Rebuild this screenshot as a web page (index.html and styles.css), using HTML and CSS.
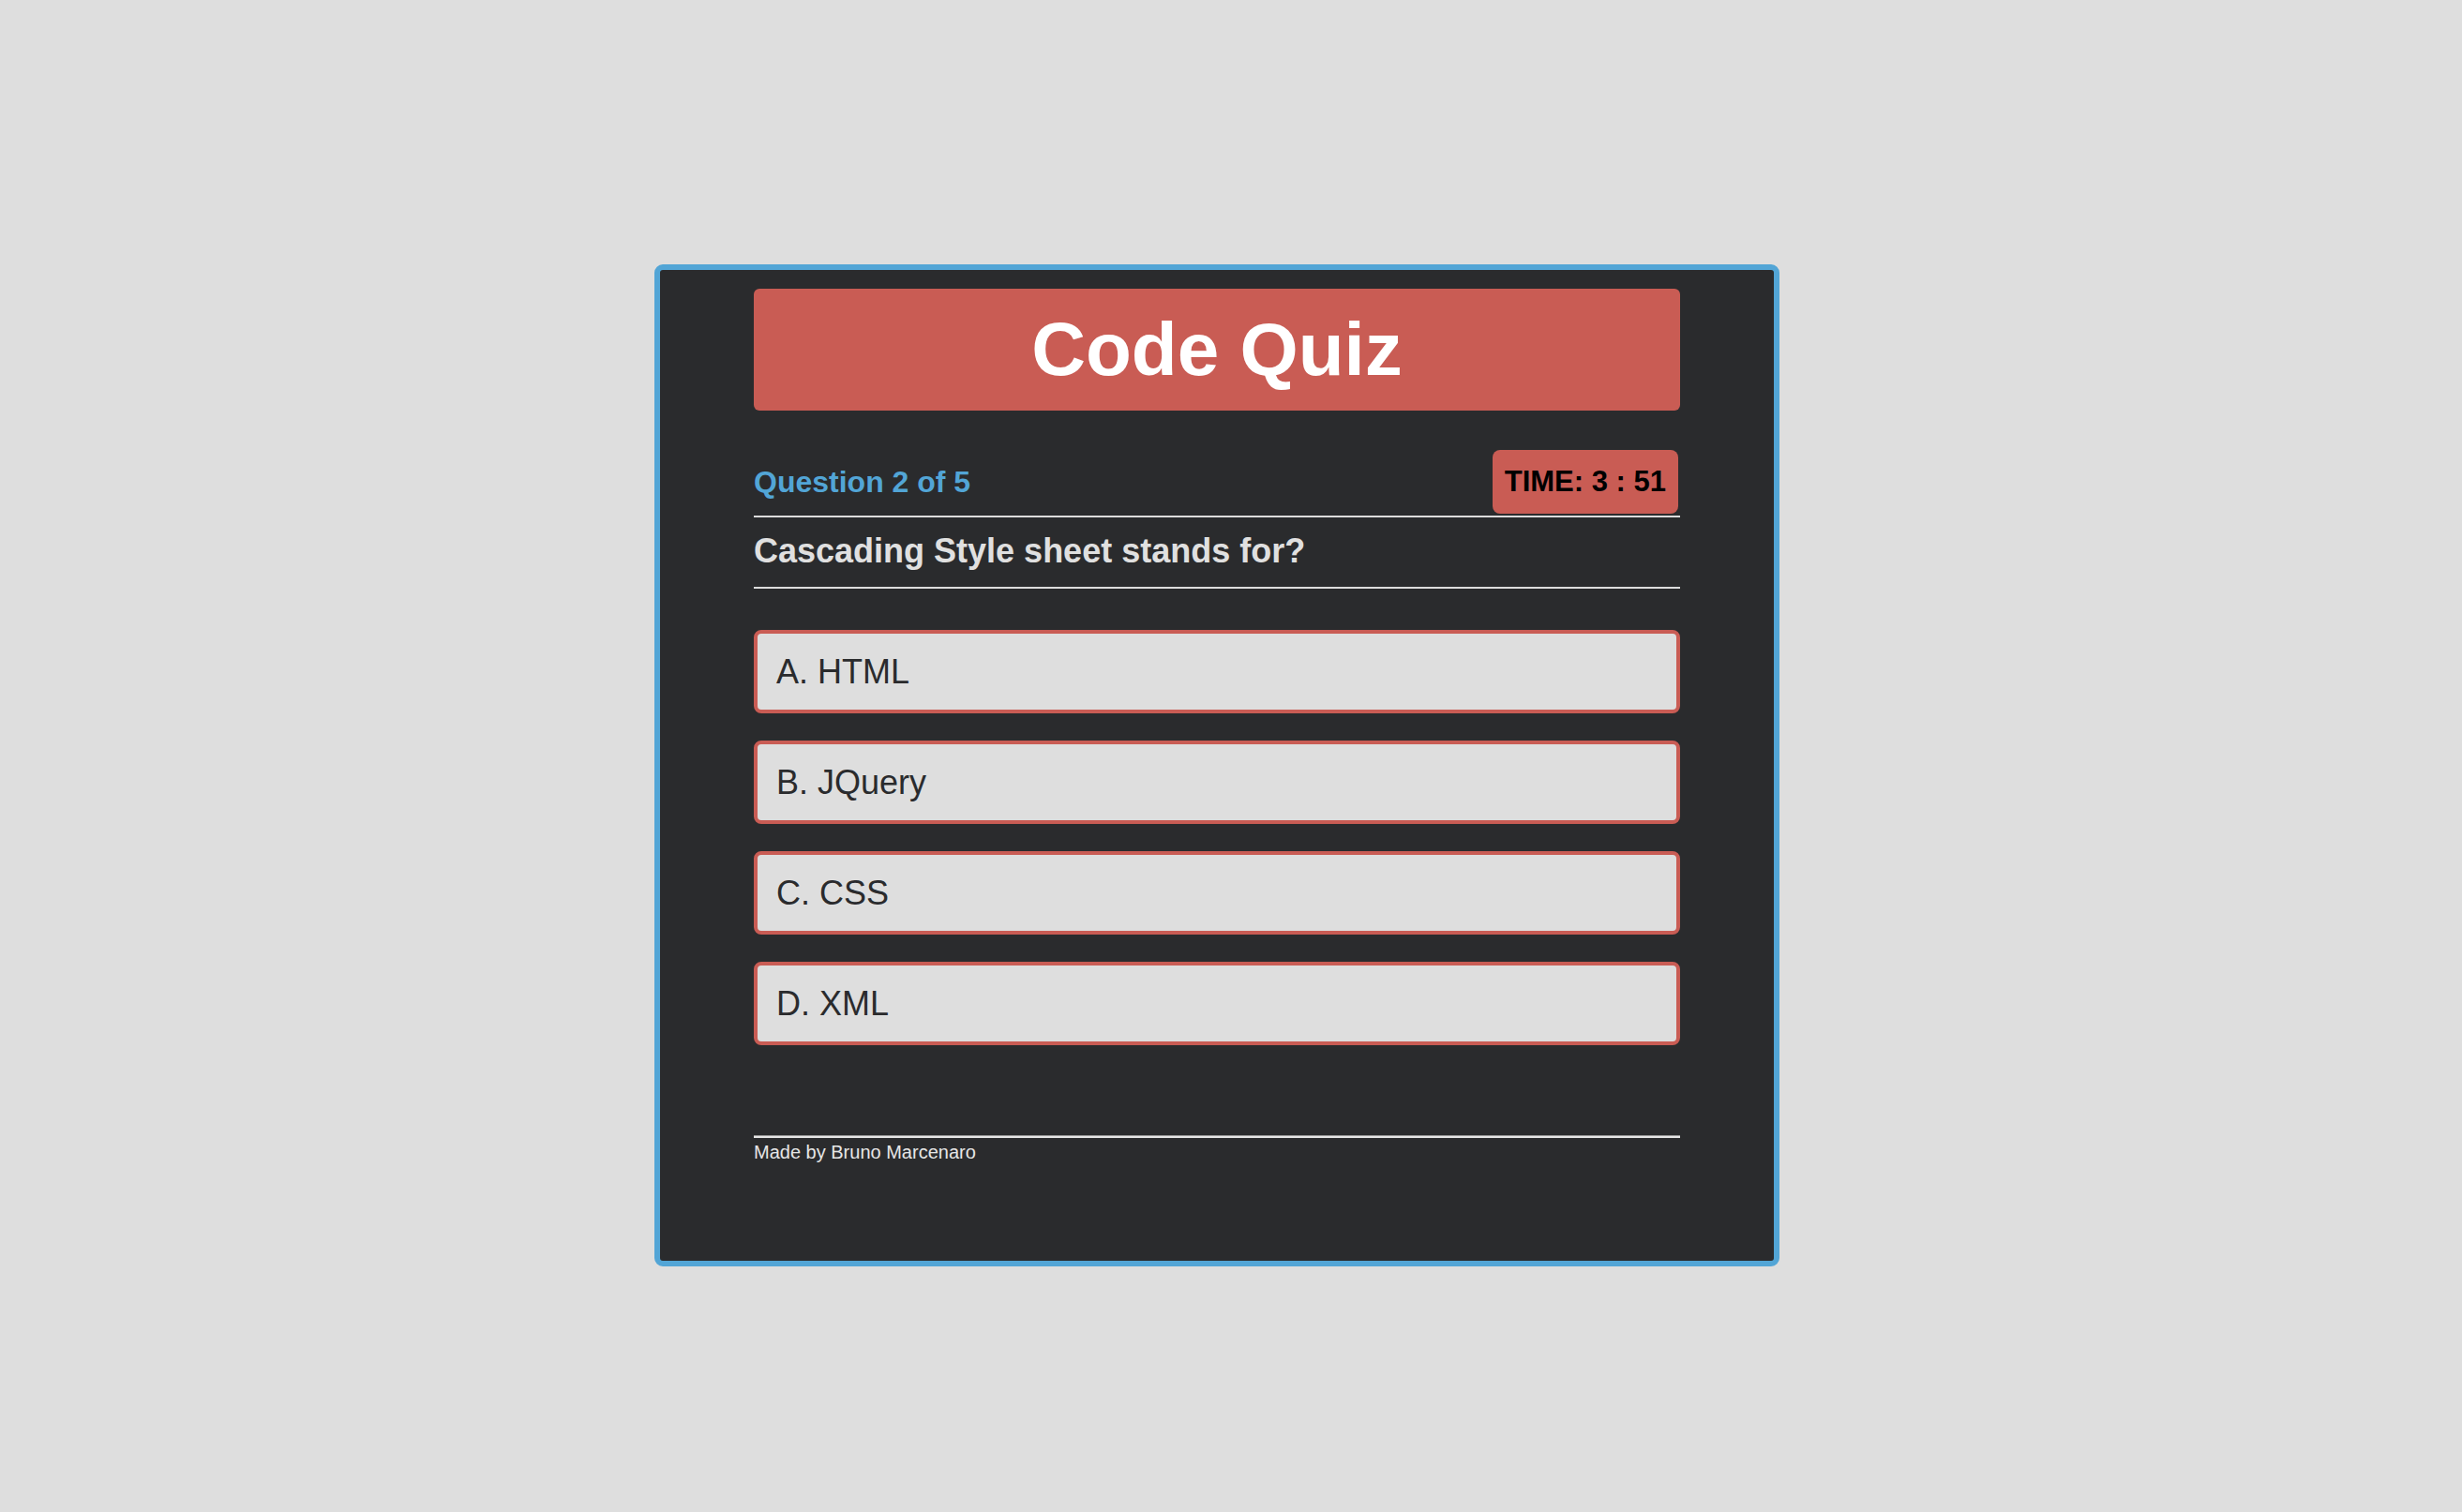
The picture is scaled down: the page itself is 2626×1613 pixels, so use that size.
FILE: index.html
```html
<!DOCTYPE html>
<html lang="en">
<head>
<meta charset="utf-8">
<title>Code Quiz</title>
<link rel="stylesheet" href="styles.css">
</head>
<body>
<div class="page">
  <main class="card">
    <header class="banner">
      <h1 class="title">Code Quiz</h1>
    </header>
    <div class="status">
      <span class="counter">Question 2 of 5</span>
      <span class="timer">TIME: 3 : 51</span>
    </div>
    <h2 class="question">Cascading Style sheet stands for?</h2>
    <ul class="options">
      <li class="option">A. HTML</li>
      <li class="option">B. JQuery</li>
      <li class="option">C. CSS</li>
      <li class="option">D. XML</li>
    </ul>
    <footer class="footer">
      <hr class="rule">
      <p class="credit">Made by Bruno Marcenaro</p>
    </footer>
  </main>
</div>
</body>
</html>
```

FILE: styles.css
```css
html, body {
  margin: 0;
  padding: 0;
  background: #dedede;
  font-family: "Liberation Sans", Arial, Helvetica, sans-serif;
}

.page {
  display: flex;
  justify-content: center;
  padding: 282px 30px 0 0;
}

.card {
  box-sizing: border-box;
  width: 1200px;
  background: #2a2b2d;
  border: 6px solid #52a5d6;
  border-radius: 9px;
  padding: 20px 100px 104px;
}

.banner {
  height: 130px;
  background: #c95c54;
  border-radius: 6px;
  display: flex;
  align-items: center;
  justify-content: center;
  margin-bottom: 42px;
}

.title {
  margin: 0;
  color: #ffffff;
  font-size: 80px;
  font-weight: bold;
  line-height: 92px;
}

.status {
  display: flex;
  justify-content: space-between;
  align-items: center;
  padding-bottom: 2px;
  border-bottom: 2px solid #dcdcdc;
}

.counter {
  color: #52a5d6;
  font-size: 32px;
  font-weight: bold;
}

.timer {
  height: 68px;
  box-sizing: border-box;
  display: flex;
  align-items: center;
  padding: 0 13px;
  margin-right: 2px;
  background: #c95c54;
  color: #000000;
  border-radius: 8px;
  font-size: 31px;
  font-weight: bold;
}

.question {
  margin: 0;
  padding: 15px 0 18px;
  font-size: 36px;
  line-height: 41px;
  font-weight: bold;
  color: #e0e0e0;
  border-bottom: 2px solid #dcdcdc;
}

.options {
  list-style: none;
  margin: 44px 0 0;
  padding: 0;
  display: flex;
  flex-direction: column;
  gap: 29px;
}

.option {
  box-sizing: border-box;
  height: 89px;
  display: flex;
  align-items: center;
  padding: 0 20px;
  background: #dedede;
  border: 4px solid #c95c54;
  border-radius: 8px;
  color: #2a2b2d;
  font-size: 36px;
}

.footer {
  margin-top: 96px;
}

.rule {
  margin: 0;
  height: 0;
  border: 0;
  border-top: 1px solid #9a9a9a;
  border-bottom: 2px solid #e6e6e6;
}

.credit {
  margin: 4px 0 0;
  font-size: 20px;
  line-height: 23px;
  color: #e6e6e6;
}
```
